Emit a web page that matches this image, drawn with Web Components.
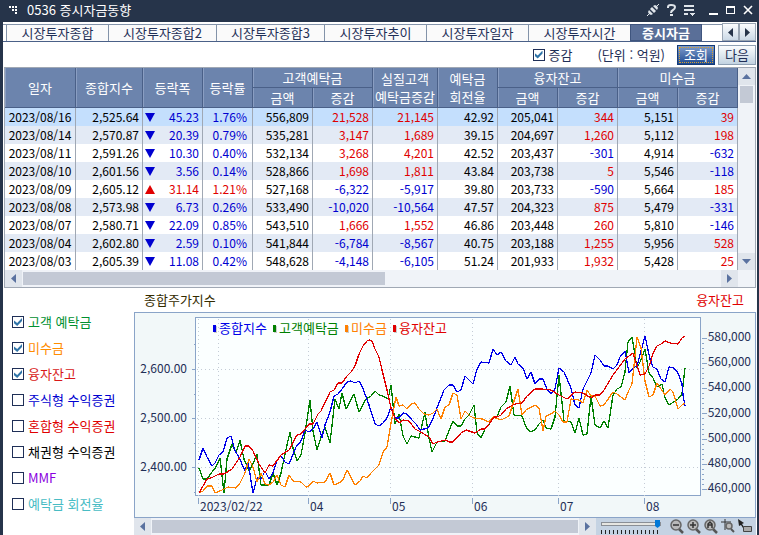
<!DOCTYPE html>
<html lang="ko">
<head>
<meta charset="utf-8">
<title>0536 증시자금동향</title>
<style>
    body {
        margin: 0;
        background: #26344a;
        font: 13px/18px "Noto Sans CJK KR", sans-serif;
        color: #1f2f57;
    }
</style>
</head>
<body>
<app-window>
    <title-bar slot="title">0536 증시자금동향</title-bar>
    <tab-strip></tab-strip>
    <query-bar></query-bar>
    <fund-table></fund-table>
    <trend-panel></trend-panel>
</app-window>

<script>
const NUM_FONT = '"Noto Sans CJK KR", sans-serif';

const BASE = `
    :host, * { box-sizing: border-box; }
    button, input { font: inherit; margin: 0; }
    svg { display: block; }
`;

const CHECK = `
    input[type=checkbox] {
        appearance: none;
        flex: none;
        width: 12px;
        height: 12px;
        border: 1px solid #1f2f57;
        background: #fff;
    }
    input[type=checkbox]:checked::before {
        content: "";
        display: block;
        width: 8px;
        height: 8px;
        margin: 1px;
        background: #2f74a8;
        clip-path: polygon(0 30%, 40% 62%, 100% 0, 100% 38%, 40% 100%, 0 66%);
    }
`;

class AppWindow extends HTMLElement {
    constructor() {
        super();
        this.attachShadow({ mode: 'open' }).innerHTML = `
            <style>
                ${BASE}
                :host { display: block; padding: 0 2px 0 3px; }
                main { background: #fff; padding: 1px 1px 1px 0; }
            </style>
            <slot name="title"></slot>
            <main><slot></slot></main>
        `;
    }
}

class TitleBar extends HTMLElement {
    constructor() {
        super();
        this.attachShadow({ mode: 'open' }).innerHTML = `
            <style>
                ${BASE}
                :host {
                    display: flex;
                    align-items: center;
                    height: 22px;
                    padding: 0 4px 2px 6px;
                    color: #fff;
                }
                h1 { flex: 1; margin: 0 0 0 9px; font-size: 13px; font-weight: 400; line-height: 20px; }
                button { padding: 0; border: 0; background: none; color: inherit; margin-left: 7px; }
                .tools { display: flex; }
                .tools + .tools { margin-left: 6px; }
            </style>
            <svg width="9" height="9" fill="#fff" shape-rendering="crispEdges">
                <path d="M0 0h2v2H0zM3 0h2v2H3zM6 0h2v2H6zM3 3h2v2H3zM6 3h2v2H6zM6 6h2v2H6z"/>
            </svg>
            <h1><slot></slot></h1>
            <div class="tools">
                <button aria-label="연결">
                    <svg width="14" height="14">
                        <path d="M1 13L4 10M10 4L13 1" stroke="#dfe4ea" stroke-width="1"/>
                        <path d="M3 7L7 11L5 12L3 11L2 9ZM4 6L6 4L10 8L8 10ZM7 3L9 2L11 3L12 5L11 7Z" fill="#dfe4ea"/>
                    </svg>
                </button>
                <button aria-label="도움말">
                    <svg width="9" height="14" fill="none" stroke="#dfe4ea" stroke-width="2">
                        <path d="M1 5V4Q1 2 4 2Q8 2 8 4Q8 6 6 7Q4 8 4 10M3 12h3"/>
                    </svg>
                </button>
                <button aria-label="메뉴">
                    <svg width="13" height="14" fill="#dfe4ea" shape-rendering="crispEdges">
                        <path d="M1 2h10v2H1zM1 6h10v2H1zM1 10h4v2H1zM6 10h6L9 13z"/>
                    </svg>
                </button>
            </div>
            <div class="tools">
                <button aria-label="최소화">
                    <svg width="10" height="14" shape-rendering="crispEdges"><path d="M0 10h9v2H0z" fill="#fff"/></svg>
                </button>
                <button aria-label="최대화">
                    <svg width="10" height="14" shape-rendering="crispEdges"><path d="M0 3h9v8H0zM1 5v5h7V5z" fill="#fff" fill-rule="evenodd"/></svg>
                </button>
                <button aria-label="닫기">
                    <svg width="10" height="14"><path d="M1 3L9 11M9 3L1 11" stroke="#fff" stroke-width="1.6"/></svg>
                </button>
            </div>
        `;
    }
}

class TabStrip extends HTMLElement {
    constructor() {
        super();
        const tabs = [
            ['시장투자종합', 102], ['시장투자종합2', 108], ['시장투자종합3', 108],
            ['시장투자추이', 102], ['시장투자일자', 102], ['시장투자시간', 102], ['증시자금', 72]
        ];
        this.attachShadow({ mode: 'open' }).innerHTML = `
            <style>
                ${BASE}
                :host { display: flex; height: 19px; border-bottom: 1px solid #4a6088; }
                nav { display: flex; flex: 1; padding: 0 19px 0 3px; margin-top: 1px; border-top: 1px solid #8393a9; }
                button {
                    border: 0;
                    border-left: 1px solid #8393a9;
                    padding: 0;
                    background: #fafafa;
                    color: #1f2f57;
                    line-height: 16px;
                    white-space: nowrap;
                }
                nav button[aria-selected=true] {
                    margin-top: -1px;
                    background: #5a6f98;
                    border: 1px solid #3f557e;
                    color: #fff;
                    font-weight: 700;
                }
                .move {
                    display: grid;
                    place-items: center;
                    width: 17px;
                    border: 1px solid #9aa6b4;
                    background: linear-gradient(#fcfdfe, #cbd9e6);
                }
            </style>
            <nav role="tablist">
                ${tabs.map(([t, w], i) => `<button role="tab" aria-selected="${i === 6}" style="flex: 0 1 ${w}px">${t}</button>`).join('')}
            </nav>
            <button class="move" aria-label="이전 탭"><svg width="5" height="9"><path d="M5 0V9L0 4.500z" fill="#26344a"/></svg></button>
            <button class="move" aria-label="다음 탭"><svg width="5" height="9"><path d="M0 0V9L5 4.500z" fill="#26344a"/></svg></button>
        `;
    }
}

class QueryBar extends HTMLElement {
    constructor() {
        super();
        this.attachShadow({ mode: 'open' }).innerHTML = `
            <style>
                ${BASE}
                ${CHECK}
                :host { display: flex; justify-content: flex-end; align-items: center; height: 25px; }
                label { display: flex; align-items: center; gap: 4px; }
                .unit { margin: 0 12px 0 25px; white-space: nowrap; }
                button {
                    width: 38px;
                    height: 20px;
                    padding: 0;
                    border: 1px solid #8ea0b3;
                    background: linear-gradient(#fbfdfe, #c3d3e1);
                    color: #1f2f57;
                    line-height: 16px;
                }
                .primary {
                    margin-right: 3px;
                    border-color: #123a78;
                    background: linear-gradient(#7f9ccb, #1f4b90);
                    color: #fff;
                    outline: 1px dotted #d8a030;
                    outline-offset: -3px;
                }
            </style>
            <label><input type="checkbox" checked>증감</label>
            <span class="unit">(단위 : 억원)</span>
            <button class="primary">조회</button>
            <button>다음</button>
        `;
    }
}

// <scroll-bar dir="h|v" size="thumb share in %">
class ScrollBar extends HTMLElement {
    connectedCallback() {
        const v = this.getAttribute('dir') === 'v';
        const size = this.getAttribute('size');
        const arrow = d => `<svg width="9" height="9"><path d="${d}" fill="#5a72a0"/></svg>`;
        this.attachShadow({ mode: 'open' }).innerHTML = `
            <style>
                ${BASE}
                :host { display: flex; flex-direction: ${v ? 'column' : 'row'}; ${v ? 'width' : 'height'}: 17px; background: #f0f3f8; }
                button { flex: none; width: 17px; height: 17px; padding: 0; border: 0; background: #e0e5ec; display: grid; place-items: center; }
                .track { flex: 1; padding: ${v ? '1px 2px' : '2px 1px'}; }
                .thumb { background: #c3c9d5; ${v ? 'height' : 'width'}: ${size}%; ${v ? 'width' : 'height'}: 100%; }
            </style>
            <button aria-label="이전">${arrow(v ? 'M0 7h9L4.500 2z' : 'M7 0v9L2 4.500z')}</button>
            <div class="track"><div class="thumb"></div></div>
            <button aria-label="다음">${arrow(v ? 'M0 2h9L4.500 7z' : 'M2 0v9L7 4.500z')}</button>
        `;
    }
}

const ROWS = [
    ['2023/08/16', '2,525.64', '▼', '45.23', '1.76%', '556,809', '21,528', '21,145', '42.92', '205,041', '344', '5,151', '39'],
    ['2023/08/14', '2,570.87', '▼', '20.39', '0.79%', '535,281', '3,147', '1,689', '39.15', '204,697', '1,260', '5,112', '198'],
    ['2023/08/11', '2,591.26', '▼', '10.30', '0.40%', '532,134', '3,268', '4,201', '42.52', '203,437', '-301', '4,914', '-632'],
    ['2023/08/10', '2,601.56', '▼', '3.56', '0.14%', '528,866', '1,698', '1,811', '43.84', '203,738', '5', '5,546', '-118'],
    ['2023/08/09', '2,605.12', '▲', '31.14', '1.21%', '527,168', '-6,322', '-5,917', '39.80', '203,733', '-590', '5,664', '185'],
    ['2023/08/08', '2,573.98', '▼', '6.73', '0.26%', '533,490', '-10,020', '-10,564', '47.57', '204,323', '875', '5,479', '-331'],
    ['2023/08/07', '2,580.71', '▼', '22.09', '0.85%', '543,510', '1,666', '1,552', '46.86', '203,448', '260', '5,810', '-146'],
    ['2023/08/04', '2,602.80', '▼', '2.59', '0.10%', '541,844', '-6,784', '-8,567', '40.75', '203,188', '1,255', '5,956', '528'],
    ['2023/08/03', '2,605.39', '▼', '11.08', '0.42%', '548,628', '-4,148', '-6,105', '51.24', '201,933', '1,932', '5,428', '25']
];

class FundTable extends HTMLElement {
    constructor() {
        super();
        this.attachShadow({ mode: 'open' }).innerHTML = `
            <style>
                ${BASE}
                :host { display: block; margin-left: 1px; border: 1px solid #a0a8b4; }
                .view { display: flex; }
                table { flex: 1; width: 0; table-layout: fixed; border-spacing: 0; }
                th, td { padding: 0; white-space: nowrap; overflow: hidden; }
                th {
                    height: 20px;
                    background: #6c84ad;
                    color: #fff;
                    font-weight: 400;
                    line-height: 18px;
                    border-right: 1px solid #4a6088;
                    border-bottom: 1px solid #4a6088;
                    box-shadow: inset 1px 0 #8a9ec2;
                }
                th span { display: block; }
                td {
                    height: 18px;
                    padding-right: 3px;
                    border-right: 1px solid #a0a8b4;
                    font: 12px/18px ${NUM_FONT};
                    color: #000;
                    text-align: right;
                }
                td:first-child { text-align: center; padding: 0; }
                td:nth-child(4) { padding-right: 5px; }
                tr:nth-child(even) td { background: #e3eaf5; }
                tr:first-child td { background: #c4dffd; }
                tbody td.up { color: #e00000; }
                tbody td.down { color: #0000d0; }
                .move { display: flex; justify-content: space-between; align-items: center; padding-left: 2px; }
                .foot { display: flex; background: #f0f3f8; }
                .foot scroll-bar { flex: 1; margin-right: 17px; }
            </style>
            <div class="view">
                <table>
                    <colgroup>${[71, 67, 60, 50, 60, 60, 65, 60, 60, 60, 60, 60].map(w => `<col style="width: ${w}px">`).join('')}</colgroup>
                    <thead>
                        <tr>
                            <th rowspan="2">일자</th><th rowspan="2">종합지수</th><th rowspan="2">등락폭</th><th rowspan="2">등락률</th>
                            <th colspan="2">고객예탁금</th><th rowspan="2"><span>실질고객</span><span>예탁금증감</span></th><th rowspan="2"><span>예탁금</span><span>회전율</span></th>
                            <th colspan="2">융자잔고</th><th colspan="2">미수금</th>
                        </tr>
                        <tr><th>금액</th><th>증감</th><th>금액</th><th>증감</th><th>금액</th><th>증감</th></tr>
                    </thead>
                    <tbody>${ROWS.map(r => this.renderRow(r)).join('')}</tbody>
                </table>
                <scroll-bar dir="v" size="10"></scroll-bar>
            </div>
            <div class="foot"><scroll-bar dir="h" size="52"></scroll-bar></div>
        `;
    }

    renderRow([date, index, dir, diff, rate, ...rest]) {
        const cls = dir === '▲' ? 'up' : 'down';
        const mark = dir === '▲' ? 'M0 9h10L5 0z' : 'M0 0h10L5 9z';
        // change columns: deposits, real deposits, credit, unsettled
        const signed = [1, 2, 5, 7];
        return `<tr>
            <td>${date}</td><td>${index}</td>
            <td class="${cls}"><div class="move"><svg width="10" height="9" fill="currentColor"><path d="${mark}"/></svg>${diff}</div></td>
            <td class="${cls}">${rate}</td>
            ${rest.map((v, i) => `<td class="${signed.includes(i) ? (v[0] === '-' ? 'down' : 'up') : ''}">${v}</td>`).join('')}
        </tr>`;
    }
}

class SeriesList extends HTMLElement {
    constructor() {
        super();
        const items = [
            ['고객 예탁금', '#009030', 1], ['미수금', '#ff8c00', 1], ['융자잔고', '#d81818', 1], ['주식형 수익증권', '#0000d0', 0],
            ['혼합형 수익증권', '#e00000', 0], ['채권형 수익증권', '#000', 0], ['MMF', '#8a00e0', 0], ['예탁금 회전율', '#48bcc4', 0]
        ];
        this.attachShadow({ mode: 'open' }).innerHTML = `
            <style>
                ${BASE}
                ${CHECK}
                :host { display: block; padding: 21px 0 0 9px; }
                label { display: flex; align-items: center; gap: 4px; height: 26px; white-space: nowrap; }
            </style>
            ${items.map(([t, c, on]) => `<label style="color: ${c}"><input type="checkbox"${on ? ' checked' : ''}>${t}</label>`).join('')}
        `;
    }
}

const SERIES = {
    deposit: ['#008000', '65,156 69,167 73,167 78,160 82,155 86,146 90,181 93,147 98,132 102,141 106,128 110,147 115,159 119,152 123,142 127,173 135,173 139,161 143,173 147,161 151,142 156,120 159,136 163,149 167,143 171,121 176,88 179,119 183,138 187,125 191,115 196,131 201,87 205,97 208,81 212,97 220,82 225,100 232,87 237,84 241,79 245,83 249,84 254,87 257,73 261,112 265,102 269,124 273,132 277,124 285,126 291,100 295,126 298,140 303,130 311,129 319,109 323,114 327,114 331,107 335,103 340,93 343,121 347,126 351,117 355,113 359,105 363,105 367,95 372,90 376,74 380,103 388,104 392,115 396,120 401,118 405,112 409,108 412,116 417,117 421,105 425,63 430,109 437,110 441,121 445,106 449,123 453,122 457,84 461,113 466,116 470,109 474,116 479,83 483,77 487,75 491,60 494,30 498,25 503,56 507,48 511,37 515,61 519,66 523,75 528,72 531,86 535,93 544,87 548,82 551,56'],
    index: ['#0000e8', '65,148 69,136 73,145 78,154 81,151 85,143 89,140 93,126 97,124 101,139 105,145 111,159 114,150 119,181 123,166 127,167 131,159 135,167 139,161 143,148 147,144 151,150 155,152 158,145 162,135 167,129 171,118 175,120 179,117 183,110 188,126 191,113 196,100 200,84 204,82 208,77 213,70 217,69 221,71 225,69 228,74 235,93 241,112 245,114 249,111 253,106 257,95 261,106 265,106 269,101 273,102 278,108 282,112 286,118 294,116 298,109 303,96 310,78 315,73 319,73 323,80 327,78 331,64 339,72 343,57 347,50 355,51 359,37 363,43 367,40 372,49 377,53 381,45 384,52 389,56 393,67 397,60 401,72 405,67 409,67 413,77 417,82 421,77 425,56 430,60 437,76 441,93 445,96 449,77 457,61 461,43 466,48 470,54 474,54 479,57 483,53 486,45 491,39 495,61 499,56 503,54 507,39 511,24 516,47 519,55 523,57 527,67 531,70 535,55 540,56 544,61 548,72 549,83 551,94'],
    unsettled: ['#ff8000', '65,181 69,179 73,174 78,174 81,181 86,179 90,177 94,175 102,176 106,171 111,161 115,147 119,155 123,170 127,161 131,172 135,173 139,170 143,163 147,173 151,175 155,163 159,169 167,170 172,175 175,174 179,169 183,171 191,170 196,161 200,173 205,171 209,168 213,158 221,173 226,169 229,164 233,166 237,161 245,153 249,140 253,135 257,111 262,85 265,94 269,93 273,97 277,92 281,91 285,97 290,102 295,103 299,101 303,97 307,107 311,95 315,93 319,81 323,83 327,107 331,99 336,104 340,106 348,107 355,110 359,105 367,108 375,104 379,92 384,77 388,103 392,98 401,93 405,96 409,119 412,104 417,102 421,99 425,103 429,110 433,110 437,87 445,88 449,91 453,78 457,84 461,84 466,94 470,93 479,80 483,82 491,88 495,78 498,72 503,25 507,36 511,69 515,85 519,83 523,71 531,83 536,77 539,80 544,97 548,93 551,91'],
    credit: ['#e00000', '65,181 73,167 77,166 85,162 90,162 98,157 106,145 111,134 115,134 119,139 125,152 131,161 135,153 139,154 147,143 155,138 163,123 167,122 175,112 179,112 184,102 187,99 196,80 200,78 204,71 208,71 213,64 217,60 221,54 225,42 229,34 233,29 235,28 238,29 241,37 245,45 249,62 253,78 257,96 261,106 265,111 269,108 275,109 281,117 285,119 295,125 299,132 303,130 312,128 315,130 319,130 327,121 332,118 341,121 347,117 351,117 355,112 360,105 363,105 367,103 372,97 377,94 381,92 388,91 393,84 401,77 407,77 417,78 425,83 433,87 441,80 449,81 457,86 461,83 466,83 470,78 479,63 491,47 499,41 506,63 511,62 516,52 519,41 523,34 527,32 531,29 536,31 544,32 548,26 551,24']
};

class TrendChart extends HTMLElement {
    constructor() {
        super();
        const left = [['2,600.00', 57], ['2,500.00', 106], ['2,400.00', 155]];
        const right = ['580,000', '560,000', '540,000', '520,000', '500,000', '480,000', '460,000'];
        const dates = [['2023/02/22', 64], ['04', 174], ['05', 256], ['06', 338], ['07', 424], ['08', 510]];
        const legend = [['종합지수', '#0000e8', 79], ['고객예탁금', '#008000', 139], ['미수금', '#ff8000', 211], ['융자잔고', '#e00000', 259]];
        const ticks = [
            ...left.map(([, y]) => `M57 ${y}H61`),
            ...[32, 82, 131, 180].map(y => `M59 ${y}H61`),
            ...Array.from({ length: 31 }, (_, i) => `M567 ${Math.round(26 + i * 5.03)}h${i % 5 ? 2 : 5}`),
            ...dates.map(([, x]) => `M${x} 185V191`)
        ].join('');
        const grid = [
            ...left.map(([, y]) => `M62 ${y}H566`),
            ...[64, 84, 174, 256, 338, 424, 510].map(x => `M${x} 6V183`)
        ].join('');

        this.attachShadow({ mode: 'open' }).innerHTML = `
            <style>
                ${BASE}
                :host { display: block; }
                svg { width: 100%; height: auto; }
                .axis { font: 12px ${NUM_FONT}; fill: #1f2f57; }
                .key { font-size: 13px; }
                .line { fill: none; stroke-width: 1.3; stroke-linejoin: round; shape-rendering: crispEdges; }
            </style>
            <svg viewBox="0 0 622 206" role="img" aria-label="종합주가지수">
                <g fill="none" stroke="#8aa4c8" shape-rendering="crispEdges" transform="translate(.5 .5)">
                    <rect width="621" height="205" fill="#f2f8f9"/>
                    <rect x="61" y="5" width="505" height="178" fill="#fbffff"/>
                    <path d="${grid}" stroke="#c4ccd6" stroke-dasharray="1 3"/>
                    <path d="${ticks}"/>
                </g>
                ${Object.values(SERIES).map(([c, p]) => `<polyline class="line" stroke="${c}" points="${p}"/>`).join('')}
                <g class="axis">
                    ${left.map(([t, y]) => `<text x="53" y="${y + 4}" text-anchor="end">${t}</text>`).join('')}
                    ${right.map((t, i) => `<text x="617" y="${29 + Math.round(i * 25.2)}" text-anchor="end">${t}</text>`).join('')}
                    ${dates.map(([t, x]) => `<text x="${x + 2}" y="199">${t}</text>`).join('')}
                </g>
                <g class="key">
                    ${legend.map(([t, c, x]) => `<rect x="${x + 1}" y="14" width="3" height="7" fill="#ccc"/><rect x="${x}" y="13" width="3" height="7" fill="${c}"/><text x="${x + 6}" y="21" fill="${c}">${t}</text>`).join('')}
                </g>
            </svg>
        `;
    }
}

class ChartTools extends HTMLElement {
    constructor() {
        super();
        const lens = (name, mark) => `
            <button aria-label="${name}">
                <svg width="14" height="15" fill="none">
                    <path d="M9 10l4 4" stroke="#555" stroke-width="2.500"/>
                    <circle cx="6" cy="6" r="5" fill="#b9b9b9" stroke="#666" stroke-width="1.500"/>
                    <path d="${mark}" stroke="#333" stroke-width="1.500"/>
                </svg>
            </button>`;
        this.attachShadow({ mode: 'open' }).innerHTML = `
            <style>
                ${BASE}
                :host { display: flex; height: 17px; background: #c5d3e3; }
                scroll-bar { flex: 1; }
                .zoom { display: flex; align-items: flex-start; width: 160px; padding: 1px 3px 0 5px; gap: 3px; }
                .range { flex: none; width: 60px; margin-right: 6px; }
                .range::after {
                    content: "";
                    display: block;
                    height: 4px;
                    margin-top: 1px;
                    background: repeating-linear-gradient(90deg, #222 0 1px, transparent 1px 4px);
                }
                input { appearance: none; display: block; width: 100%; height: 10px; background: none; }
                input::-webkit-slider-runnable-track { height: 4px; background: #e6e6e2; border: 1px solid #8a8f96; }
                input::-webkit-slider-thumb {
                    appearance: none;
                    width: 5px;
                    height: 8px;
                    margin-top: -3px;
                    background: #0078d7;
                    clip-path: polygon(0 0, 100% 0, 100% 75%, 50% 100%, 0 75%);
                }
                button { padding: 0; border: 0; background: none; }
            </style>
            <scroll-bar dir="h" size="100"></scroll-bar>
            <div class="zoom">
                <div class="range"><input type="range" value="100" aria-label="확대 비율"></div>
                ${lens('축소', 'M3 6h6')}
                ${lens('확대', 'M3 6h6M6 3v6')}
                ${lens('전체', 'M4 9V5l2-2 2 2v4M4 6h4')}
                <button aria-label="영역 확대">
                    <svg width="14" height="15" fill="none">
                        <path d="M4 0v11M0 3h10" stroke="#333"/>
                        <circle cx="8" cy="7" r="3" fill="#b9b9b9" stroke="#666" stroke-width="1.500"/>
                        <path d="M10 10l3 3" stroke="#555" stroke-width="2"/>
                    </svg>
                </button>
                <button aria-label="선택">
                    <svg width="14" height="15">
                        <path d="M0 0l6 4-2 1 2 3-1 1-2-3-2 1z" fill="#222"/>
                        <path d="M5.500 7.500h8v5h-8z" fill="#aaa" stroke="#444"/>
                    </svg>
                </button>
            </div>
        `;
    }
}

class TrendPanel extends HTMLElement {
    constructor() {
        super();
        this.attachShadow({ mode: 'open' }).innerHTML = `
            <style>
                ${BASE}
                :host { display: flex; }
                series-list { width: 131px; }
                section { flex: 1; min-width: 0; }
                header { display: flex; justify-content: space-between; height: 24px; padding: 0 12px 0 10px; line-height: 24px; color: #332b00; }
                header span:last-child { color: #e00000; }
            </style>
            <series-list></series-list>
            <section>
                <header><span>종합주가지수</span><span>융자잔고</span></header>
                <trend-chart></trend-chart>
                <chart-tools></chart-tools>
            </section>
        `;
    }
}

customElements.define('app-window', AppWindow);
customElements.define('title-bar', TitleBar);
customElements.define('tab-strip', TabStrip);
customElements.define('query-bar', QueryBar);
customElements.define('scroll-bar', ScrollBar);
customElements.define('fund-table', FundTable);
customElements.define('series-list', SeriesList);
customElements.define('trend-chart', TrendChart);
customElements.define('chart-tools', ChartTools);
customElements.define('trend-panel', TrendPanel);
</script>
</body>
</html>
